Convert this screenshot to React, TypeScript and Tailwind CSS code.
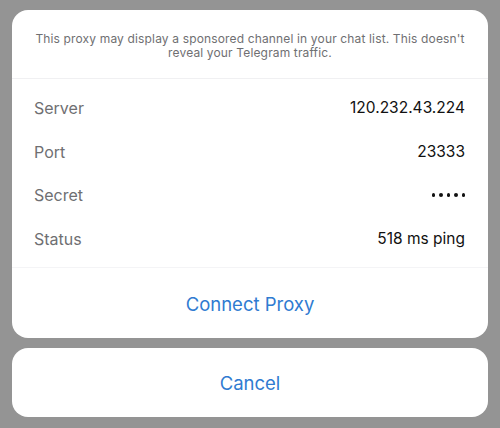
import React from "react";

const rows: [string, React.ReactNode][] = [
  ["Server", "120.232.43.224"],
  ["Port", "23333"],
  [
    "Secret",
    <span className="flex gap-[4px] items-center">
      {[0, 1, 2, 3, 4].map((i) => (
        <span key={i} className="w-[3.5px] h-[3.5px] rounded-full bg-[#111]" />
      ))}
    </span>,
  ],
  ["Status", "518 ms ping"],
];

export default function App() {
  return (
    <div
      className="w-[500px] h-[428px] bg-[#949494] px-3 pt-[10px] flex flex-col gap-[10px]"
      style={{ fontFamily: "Inter, 'Open Sans', sans-serif" }}
    >
      <div className="bg-white rounded-[16px] flex flex-col">
        <div className="h-[69px] flex items-center justify-center px-5 pt-[4px] border-b border-[#f0f0f2]">
          <p className="text-center text-[12px] leading-[14px] text-[#6f6f72] tracking-[0.15px]">
            This proxy may display a sponsored channel in your chat list. This doesn't reveal your Telegram traffic.
          </p>
        </div>
        <div className="pt-[7px] pb-[6px] border-b border-[#f4f4f6]">
          {rows.map(([k, v]) => (
            <div key={k} className="h-[43.7px] flex items-center justify-between pl-[22px] pr-[23px]">
              <span className="text-[16px] text-[#6f6f72]">{k}</span>
              <span className="text-[15.5px] text-[#111]">{v}</span>
            </div>
          ))}
        </div>
        <div className="h-[70px] flex items-center justify-center pt-[4px]">
          <span className="text-[18.5px] text-[#2f7bd1]">Connect Proxy</span>
        </div>
      </div>
      <div className="bg-white rounded-[16px] h-[69px] flex items-center justify-center pt-[4px]">
        <span className="text-[18.5px] text-[#2f7bd1]">Cancel</span>
      </div>
    </div>
  );
}
